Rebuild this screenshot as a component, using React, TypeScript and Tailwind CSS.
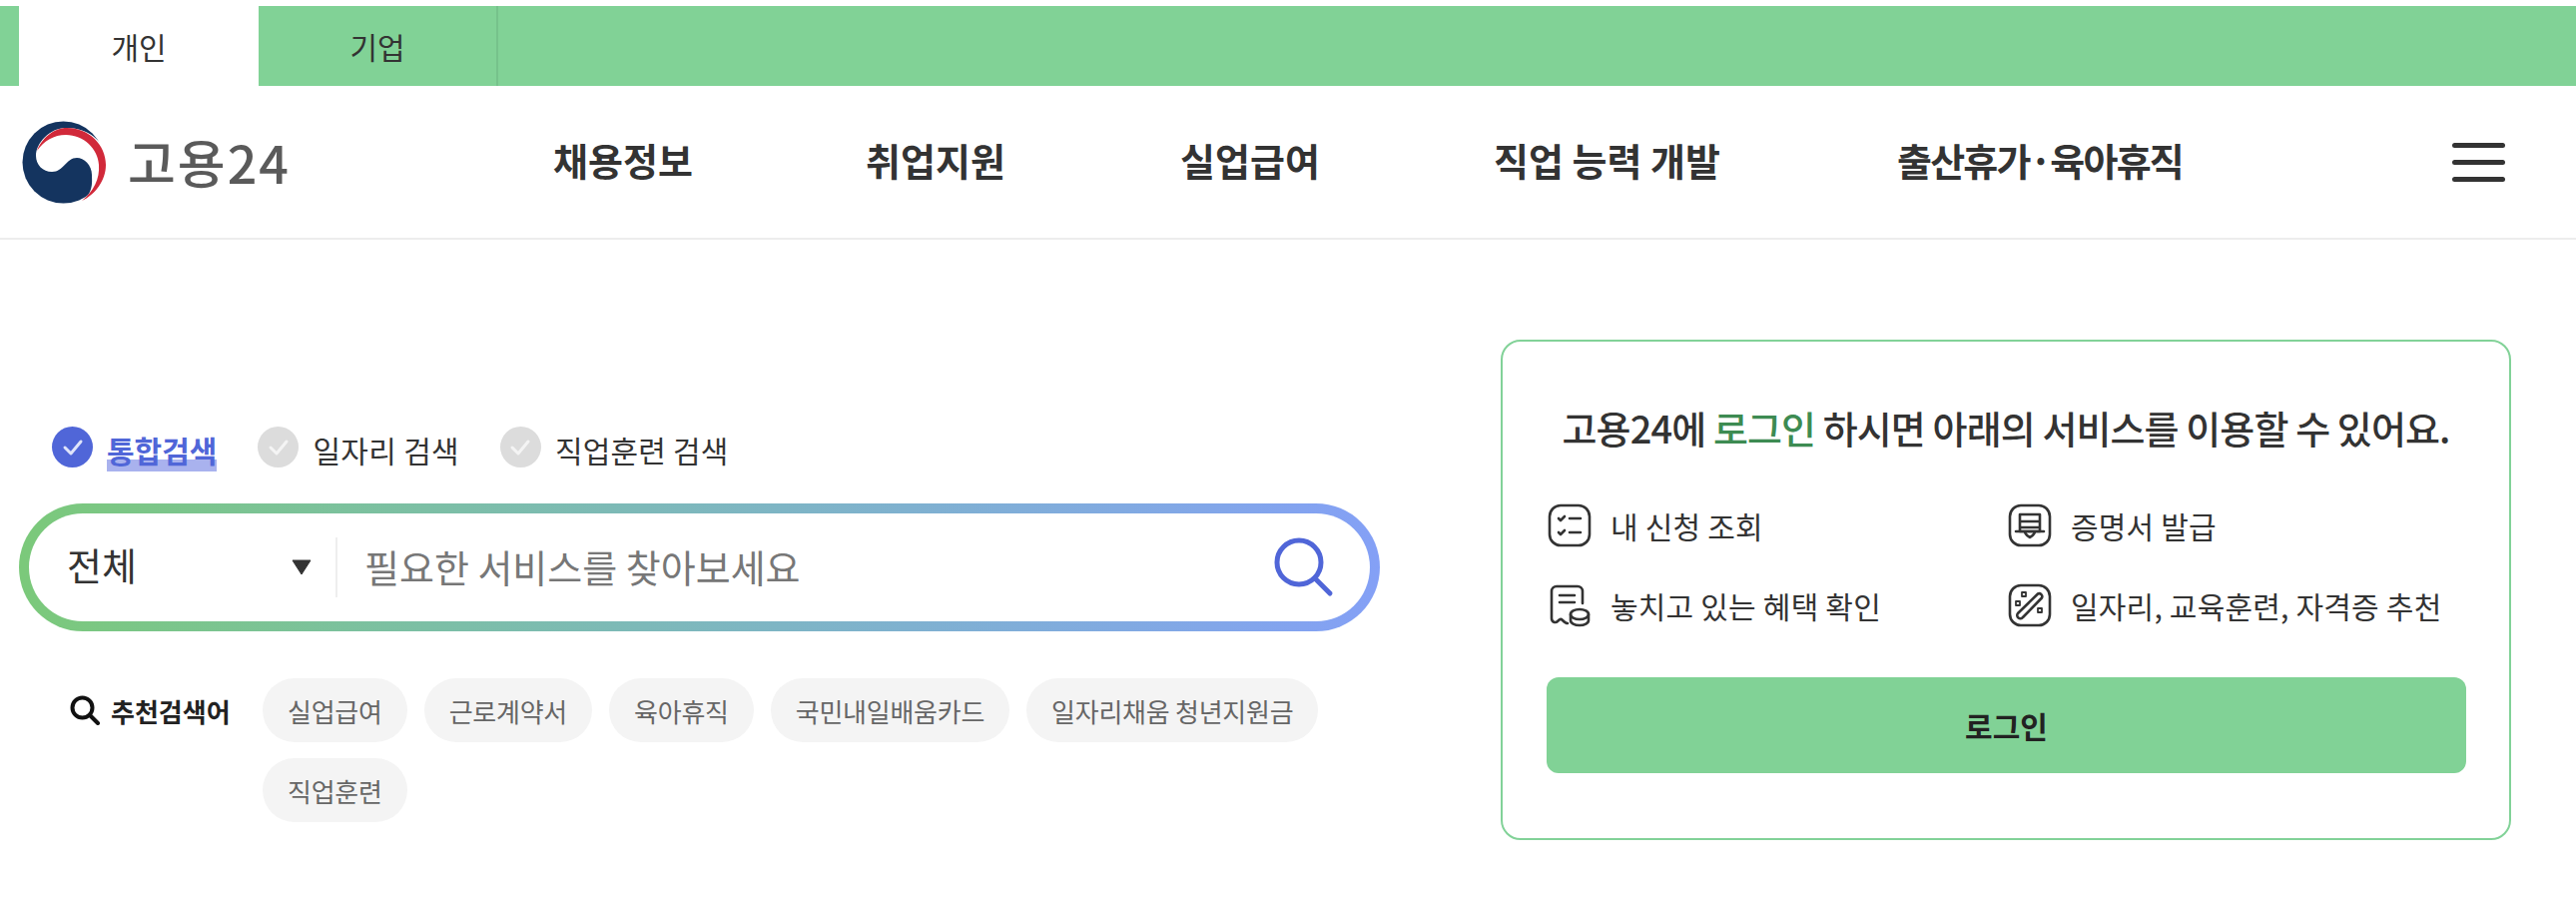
const FONT = "font-['Noto_Sans_CJK_KR','Noto_Sans',sans-serif]";

const navItems = [
  { label: "채용정보", w: "w-[137px]", mr: "mr-[176px]", t: "" },
  { label: "취업지원", w: "w-[137px]", mr: "mr-[178px]", t: "" },
  { label: "실업급여", w: "w-[137px]", mr: "mr-[177px]", t: "" },
  { label: "직업 능력 개발", w: "w-[225px]", mr: "mr-[179px]", t: "" },
  { label: "출산휴가·육아휴직", w: "w-[285px]", mr: "", t: "tracking-[-1.8px]" },
];

const keywords = ["실업급여", "근로계약서", "육아휴직", "국민내일배움카드", "일자리채움 청년지원금", "직업훈련"];

function Logo() {
  return (
    <svg width="85" height="83" viewBox="0 0 85 83">
      <circle cx="41.5" cy="41.5" r="41" fill="#14345f" />
      <path d="M60 82C72 70 70 62 70 54C70 44 62 37 55 37C44 37 42 51 30 51C21 51 14 44 14 35C14 22 28 7 44 7C70 7 88 25 85 48C84 62 73 76 60 82Z" fill="#fff" />
      <path d="M15 30C20 17 32 7 45 7C67 7 84 24 84 44C84 60 73 74 60 80C72 70 78 58 77 44C76 28 62 14 44 14C32 14 22 20 15 30Z" fill="#d1293a" />
    </svg>
  );
}

function Radio({ active }: { active?: boolean }) {
  return (
    <span className={`flex h-[41px] w-[41px] items-center justify-center rounded-full ${active ? "bg-[#5066d8]" : "bg-[#dcdcdc]"}`}>
      <svg width="22" height="18" viewBox="0 0 22 18" fill="none">
        <path d="M3 9l6 6 10-12" stroke={active ? "#dfe4fa" : "#f4f4f4"} strokeWidth="3" strokeLinecap="round" strokeLinejoin="round" />
      </svg>
    </span>
  );
}

function CheckListIcon() {
  return (
    <svg width="44" height="44" viewBox="0 0 44 44" fill="none" stroke="#333" strokeWidth="2.6" strokeLinecap="round" strokeLinejoin="round">
      <rect x="2" y="2" width="40" height="40" rx="11" />
      <path d="M11 15l2 2 4-4M11 29l2 2 4-4M22 15h11M22 29h11" />
    </svg>
  );
}

function ReceiptIcon() {
  return (
    <svg width="44" height="44" viewBox="0 0 44 44" fill="none" stroke="#333" strokeWidth="2.6" strokeLinecap="round" strokeLinejoin="round">
      <path d="M35 20V8a5 5 0 0 0-5-5H9a5 5 0 0 0-5 5v27c0 4 4 5 6 3s3-3 5-1 3 3 5 3" />
      <path d="M12 12h15M12 19h15" />
      <ellipse cx="32" cy="31" rx="9" ry="5" />
      <path d="M23 31v6c0 3 4 5 9 5s9-2 9-5v-6" />
    </svg>
  );
}

function CertificateIcon() {
  return (
    <svg width="44" height="44" viewBox="0 0 44 44" fill="none" stroke="#333" strokeWidth="2.6" strokeLinecap="round" strokeLinejoin="round">
      <rect x="2" y="2" width="40" height="40" rx="11" />
      <path d="M12 11h20v17H12zM12 18h20M12 24h20" />
      <path d="M8 28h28M17 28c0 3 2 4 5 6 3-2 5-3 5-6" />
    </svg>
  );
}

function WandIcon() {
  return (
    <svg width="44" height="44" viewBox="0 0 44 44" fill="none" stroke="#333" strokeWidth="2.6" strokeLinecap="round" strokeLinejoin="round">
      <rect x="2" y="2" width="40" height="40" rx="11" />
      <path d="M30 10.5a3 3 0 0 1 4 4L15 34a3 3 0 0 1-5-4z" />
      <path d="M14 9h4v4h-4zM8 18h4v4H8zM30 25h4v4h-4z" strokeWidth="1.8" />
    </svg>
  );
}

function Service({ icon, label, w }: { icon: React.ReactNode; label: string; w: string }) {
  return (
    <div className={`flex items-center gap-[19px] ${w}`}>
      {icon}
      <span className="text-[30px] leading-[44px] tracking-[0.2px] whitespace-nowrap text-[#333]">{label}</span>
    </div>
  );
}

export default function App() {
  return (
    <div className={`h-[920px] w-[2580px] overflow-hidden bg-white pt-[6px] ${FONT}`}>
      <div className="flex h-[80px] bg-[#81d296] pl-[19px] text-[30px] text-[#333]">
        <div className="flex w-[240px] items-center justify-center bg-white">개인</div>
        <div className="flex w-[240px] items-center justify-center border-r-2 border-[#76c28b]">기업</div>
      </div>

      <header className="flex h-[154px] items-center border-b-2 border-[#ededed] pl-[22px] pr-[71px]">
        <Logo />
        <span className="ml-[21px] w-[158px] text-[52px] leading-[60px] font-medium tracking-[2px] whitespace-nowrap text-[#5a5a5a]">고용24</span>
        <nav className="-mt-[4px] ml-[268px] flex flex-1 items-center">
          {navItems.map((n) => (
            <span key={n.label} className={`${n.w} ${n.mr} ${n.t} whitespace-nowrap text-[38px] leading-[48px] font-bold text-[#333]`}>
              {n.label}
            </span>
          ))}
        </nav>
        <div className="flex flex-col gap-[12px]">
          <span className="h-[5px] w-[53px] rounded-full bg-[#333]" />
          <span className="h-[5px] w-[53px] rounded-full bg-[#333]" />
          <span className="h-[5px] w-[53px] rounded-full bg-[#333]" />
        </div>
      </header>

      <main className="flex pl-[19px] pt-[100px]">
        <section className="w-[1363px] pt-[87px]">
          <div className="flex h-[41px] items-center pl-[33px] text-[#333]">
            <Radio active />
            <span className="mt-[4px] ml-[14px] bg-[linear-gradient(transparent_72%,#a9b2ee_72%)] text-[30px] leading-[44px] font-bold text-[#5066d8]">통합검색</span>
            <span className="ml-[41px]"><Radio /></span>
            <span className="mt-[4px] ml-[14px] text-[30px] leading-[44px] tracking-[0.3px]">일자리 검색</span>
            <span className="ml-[41px]"><Radio /></span>
            <span className="mt-[4px] ml-[14px] text-[30px] leading-[44px] tracking-[0.2px]">직업훈련 검색</span>
          </div>

          <div className="mt-[36px] h-[128px] rounded-full bg-linear-to-r from-[#7bc97a] to-[#84a0f6] p-[10px]">
            <div className="flex h-full items-center rounded-full bg-white pl-[38px] pr-[36px]">
              <span className="-mt-[6px] w-[225px] text-[38px] leading-[50px] text-[#333]">전체</span>
              <svg width="20" height="16" viewBox="0 0 20 16"><path d="M1 1h18l-9 14z" fill="#333" strokeLinejoin="round" stroke="#333" /></svg>
              <span className="ml-[24px] h-[60px] w-[2px] bg-[#eee]" />
              <span className="-mt-[2px] ml-[27px] flex-1 text-[38px] leading-[50px] text-[#777]">필요한 서비스를 찾아보세요</span>
              <svg width="60" height="60" viewBox="0 0 60 60" fill="none" stroke="#5066d8" strokeWidth="5" strokeLinecap="round">
                <circle cx="25" cy="25" r="22" />
                <path d="M41 41l15 15" />
              </svg>
            </div>
          </div>

          <div className="mt-[47px] flex pl-[51px]">
            <div className="flex h-[64px] w-[193px] shrink-0 items-center">
              <svg width="30" height="30" viewBox="0 0 30 30" fill="none" stroke="#111" strokeWidth="4" strokeLinecap="round">
                <circle cx="12.5" cy="12.5" r="10" />
                <path d="M20 20l8 8" />
              </svg>
              <span className="ml-[11px] whitespace-nowrap text-[26px] font-bold text-[#222]">추천검색어</span>
            </div>
            <div className="flex w-[1080px] flex-wrap gap-x-[17px] gap-y-[16px]">
              {keywords.map((k) => (
                <span key={k} className="flex h-[64px] items-center rounded-full bg-[#f4f4f4] px-[25px] text-[26px] tracking-[-0.25px] text-[#666]">
                  {k}
                </span>
              ))}
            </div>
          </div>
        </section>

        <aside className="ml-[121px] flex h-[501px] w-[1012px] flex-col rounded-[20px] border-2 border-[#82d298] px-[44px] pt-[58px]">
          <h2 className="text-center text-[38px] leading-[56px] font-medium tracking-[-0.9px] whitespace-nowrap text-[#333]">
            고용24에 <span className="text-[#3d8b52]">로그인</span> 하시면 아래의 서비스를 이용할 수 있어요.
          </h2>
          <div className="mt-[48px] flex flex-wrap gap-y-[36px] pl-[1px]">
            <Service icon={<CheckListIcon />} label="내 신청 조회" w="w-[461px]" />
            <Service icon={<CertificateIcon />} label="증명서 발급" w="w-[455px]" />
            <Service icon={<ReceiptIcon />} label="놓치고 있는 혜택 확인" w="w-[461px]" />
            <Service icon={<WandIcon />} label="일자리, 교육훈련, 자격증 추천" w="w-[455px]" />
          </div>
          <button className="mt-[50px] h-[96px] w-[921px] rounded-[12px] bg-[#81d296] text-[30px] font-bold text-[#222]">로그인</button>
        </aside>
      </main>
    </div>
  );
}
